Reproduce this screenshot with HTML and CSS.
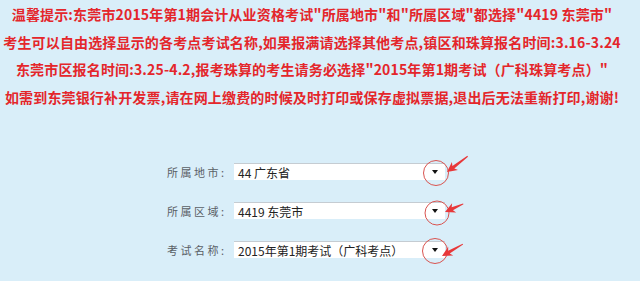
FILE: index.html
```html
<!DOCTYPE html>
<html lang="zh-CN">
<head>
<meta charset="utf-8">
<title>考试报名</title>
<link rel="stylesheet" href="styles.css">
</head>
<body>
<div class="page">
  <div class="notice">
    <div class="line">温馨提示:东莞市2015年第1期会计从业资格考试"所属地市"和"所属区域"都选择"4419 东莞市"</div>
    <div class="line">考生可以自由选择显示的各考点考试名称,如果报满请选择其他考点,镇区和珠算报名时间:3.16-3.24</div>
    <div class="line">东莞市区报名时间:3.25-4.2,报考珠算的考生请务必选择"2015年第1期考试（广科珠算考点）"</div>
    <div class="line">如需到东莞银行补开发票,请在网上缴费的时候及时打印或保存虚拟票据,退出后无法重新打印,谢谢!</div>
  </div>
  <div class="form">
    <div class="row">
      <span class="label">所属地市:</span>
      <div class="select">
        <span class="value">44 广东省</span>
        <span class="caret"></span>
        <svg class="mark" width="290" height="40" viewBox="0 0 290 40">
          <circle cx="202" cy="9" r="12.5" fill="none" stroke="#d9534f" stroke-width="1"/>
          <polygon transform="translate(213 8) rotate(-37.3)" points="0,0 10,-5 8,-1.6 26,-0.5 26,0.5 8,1.6 10,5" fill="#e8383a"/>
        </svg>
      </div>
    </div>
    <div class="row">
      <span class="label">所属区域:</span>
      <div class="select">
        <span class="value">4419 东莞市</span>
        <span class="caret"></span>
        <svg class="mark" width="290" height="40" viewBox="0 0 290 40">
          <circle cx="203" cy="10" r="12" fill="none" stroke="#d9534f" stroke-width="1"/>
          <polygon transform="translate(211 9) rotate(-24)" points="0,0 10,-5 8,-1.6 20,-0.5 20,0.5 8,1.6 10,5" fill="#e8383a"/>
        </svg>
      </div>
    </div>
    <div class="row">
      <span class="label">考试名称:</span>
      <div class="select">
        <span class="value">2015年第1期考试（广科考点）</span>
        <span class="caret"></span>
        <svg class="mark" width="290" height="40" viewBox="0 0 290 40">
          <circle cx="201" cy="9" r="12.5" fill="none" stroke="#d9534f" stroke-width="1"/>
          <polygon transform="translate(208 14) rotate(-29.7)" points="0,0 10,-5 8,-1.6 24,-0.5 24,0.5 8,1.6 10,5" fill="#e8383a"/>
        </svg>
      </div>
    </div>
  </div>
</div>
</body>
</html>
```
FILE: styles.css
```css
html, body {
  margin: 0;
  padding: 0;
  background: #d9eef9;
}
.page {
  width: 640px;
  height: 281px;
  overflow: hidden;
  background: #d9eef9;
}
.notice {
  width: 624px;
  padding-top: 1px;
  text-align: center;
  color: #e4262b;
  font-family: "Noto Sans CJK SC", sans-serif;
  font-weight: bold;
  font-size: 14px;
  letter-spacing: 0.16px;
  line-height: 27.5px;
  white-space: nowrap;
}
.form {
  padding-top: 52px;
  padding-left: 167px;
  display: flex;
  flex-direction: column;
  gap: 22px;
}
.row {
  display: flex;
  align-items: center;
  height: 17px;
}
.label {
  width: 67px;
  font-family: "Noto Sans CJK SC", sans-serif;
  font-size: 11px;
  letter-spacing: 2.5px;
  color: #5a6066;
}
.select {
  position: relative;
  width: 211px;
  height: 17px;
  box-sizing: border-box;
  background: #fff;
  border-top: 1px solid #c5ccd2;
  display: flex;
  align-items: center;
  padding-left: 4px;
}
.value {
  font-family: "Noto Sans CJK SC", sans-serif;
  font-size: 12px;
  color: #222;
  flex: 1;
}
.caret {
  width: 0;
  height: 0;
  border-left: 3px solid transparent;
  border-right: 3px solid transparent;
  border-top: 4px solid #111;
  margin-right: 7px;
}
.mark {
  position: absolute;
  left: 0;
  top: 0;
  overflow: visible;
  pointer-events: none;
}
```
